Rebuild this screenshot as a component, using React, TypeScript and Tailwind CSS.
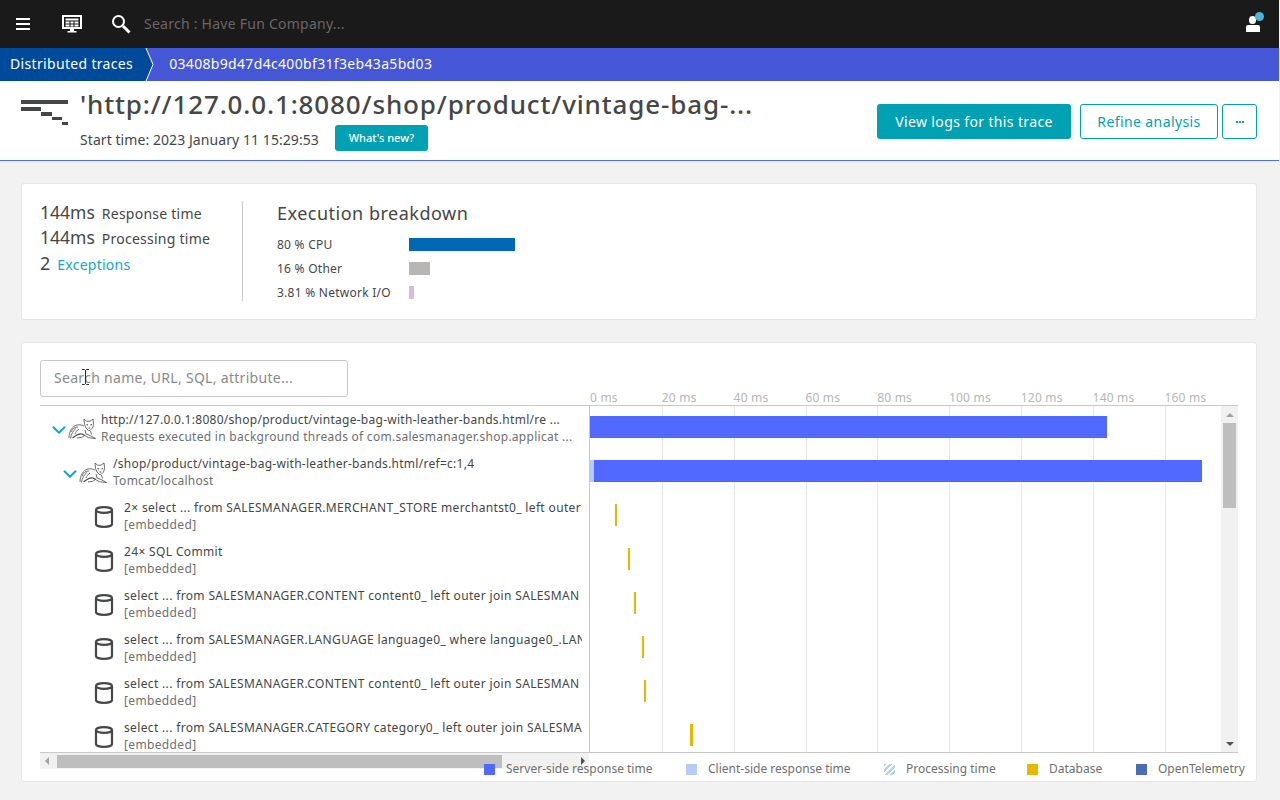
import { ChevronDown } from "lucide-react";

const ticks = ["0 ms", "20 ms", "40 ms", "60 ms", "80 ms", "100 ms", "120 ms", "140 ms", "160 ms"];

const rows = [
  {
    kind: "tomcat",
    indent: 0,
    title: "http://127.0.0.1:8080/shop/product/vintage-bag-with-leather-bands.html/re ...",
    sub: "Requests executed in background threads of com.salesmanager.shop.applicat ...",
    bars: [{ left: 0, width: 517, color: "#5269ff" }],
  },
  {
    kind: "tomcat",
    indent: 1,
    title: "/shop/product/vintage-bag-with-leather-bands.html/ref=c:1,4",
    sub: "Tomcat/localhost",
    bars: [
      { left: 0, width: 4, color: "#b4ccf7" },
      { left: 4, width: 608, color: "#5269ff" },
    ],
  },
  { kind: "db", title: "2× select ... from SALESMANAGER.MERCHANT_STORE merchantst0_ left outer", sub: "[embedded]", bars: [{ left: 25, width: 2, color: "#e6b800" }] },
  { kind: "db", title: "24× SQL Commit", sub: "[embedded]", bars: [{ left: 38, width: 2, color: "#e6b800" }] },
  { kind: "db", title: "select ... from SALESMANAGER.CONTENT content0_ left outer join SALESMAN", sub: "[embedded]", bars: [{ left: 44, width: 2, color: "#e6b800" }] },
  { kind: "db", title: "select ... from SALESMANAGER.LANGUAGE language0_ where language0_.LAN", sub: "[embedded]", bars: [{ left: 52, width: 2, color: "#e6b800" }] },
  { kind: "db", title: "select ... from SALESMANAGER.CONTENT content0_ left outer join SALESMAN", sub: "[embedded]", bars: [{ left: 54, width: 2, color: "#e6b800" }] },
  { kind: "db", title: "select ... from SALESMANAGER.CATEGORY category0_ left outer join SALESMA", sub: "[embedded]", bars: [{ left: 100, width: 3, color: "#e6b800" }] },
];

const legend = [
  { label: "Server-side response time", swatch: "bg-[#5269ff]", width: "w-[202px]" },
  { label: "Client-side response time", swatch: "bg-[#b4ccf7]", width: "w-[198px]" },
  { label: "Processing time", swatch: "bg-[repeating-linear-gradient(135deg,#b4ccf7_0,#b4ccf7_2px,#ffffff_2px,#ffffff_4px)]", width: "w-[143px]" },
  { label: "Database", swatch: "bg-[#e6b800]", width: "w-[109px]" },
  { label: "OpenTelemetry", swatch: "bg-[#4a6cb3]", width: "" },
];

function TomcatIcon() {
  return (
    <svg width="28" height="22" viewBox="0 0 28 22" fill="none" stroke="#4a4a4a" strokeWidth="0.8" className="ml-[-2px] shrink-0">
      <path d="M1 20C1 14 4 8 9 7c3-.6 5 0 7 1" />
      <path d="M2.500 20.500c.5-4 2.500-8 5.500-10M3 14c2-4 4-5 7-5" />
      <path d="M4.500 20l3.500-2.500c2-1.500 4-2 6-1.500l3 1.500" strokeWidth="1.2" />
      <path d="M16 1l2.500 2.200h3.500L25 1l.6 5.500-1.100 3.500-2.500 2.500h-1.500l-2.500-2.500-1.500-3.500z" fill="#ffffff" />
      <path d="M18.500 6.500l1.500.6M24 6.500l-1.500.6M20.500 10h1.800" strokeWidth="1.1" />
      <path d="M11 11c-2 1.500-3.500 3-4 5M17 12l1 4 4 1.500 5.500 3-7-.8-4-2.200-3 2-4.500.4" />
      <path d="M22.500 13l1 3.500" />
    </svg>
  );
}

function DbIcon() {
  return (
    <svg width="20" height="24" viewBox="0 0 20 24" fill="none" stroke="#454646" strokeWidth="2.2" className="shrink-0">
      <ellipse cx="10" cy="5" rx="8" ry="2.8" />
      <path d="M2 5v14c0 1.600 3.600 2.800 8 2.800s8-1.200 8-2.800V5" />
    </svg>
  );
}

function TraceRow({ row }: { row: (typeof rows)[number] }) {
  const isDb = row.kind === "db";
  return (
    <div className="flex h-11">
      <div className="w-[542px] shrink-0 overflow-hidden">
        {isDb ? (
          <div className="flex h-11 pl-[54px]">
            <div className="mt-[11px] w-[30px] shrink-0">
              <DbIcon />
            </div>
            <div className="w-[458px] shrink-0 overflow-hidden whitespace-nowrap pt-[5px] text-xs leading-[17px] tracking-[0.35px]">
              <div className="text-[#454646]">{row.title}</div>
              <div className="text-[#6f6f6f]">{row.sub}</div>
            </div>
          </div>
        ) : (
          <div className={`flex h-11 ${row.indent ? "pl-[19px]" : "pl-[8px]"}`}>
            <ChevronDown className="mt-[13px] h-[22px] w-[22px] shrink-0 text-[#12a7c9]" strokeWidth={2.2} />
            <div className="mt-[12px]">
              <TomcatIcon />
            </div>
            <div className={`${row.indent ? "ml-[6px]" : "ml-[5px]"} overflow-hidden whitespace-nowrap pt-[6px] text-xs leading-[16px] tracking-[0.27px]`}>
              <div className="text-[#454646]">{row.title}</div>
              <div className="mt-[1px] text-[#6f6f6f]">{row.sub}</div>
            </div>
          </div>
        )}
      </div>
      <div className="relative ml-[8px] w-[632px] shrink-0">
        {row.bars.map((b, i) => (
          <div
            key={i}
            className="absolute top-[10px] h-[22px]"
            style={{ left: b.left, width: b.width, backgroundColor: b.color }}
          />
        ))}
      </div>
    </div>
  );
}

export default function App() {
  return (
    <div className="h-[800px] w-[1280px] overflow-hidden bg-[#f2f2f2] font-['Noto_Sans',sans-serif] text-[#454646]">
      <div className="w-[1279px]">
        {/* top bar */}
        <div className="flex h-12 items-center bg-[#1b1a1b] pr-[15px] pl-[16px]">
          <div className="flex w-[14px] flex-col gap-[3px]">
            <div className="h-[2px] bg-white" />
            <div className="h-[2px] bg-white" />
            <div className="h-[2px] bg-white" />
          </div>
          <svg width="20" height="18" viewBox="0 0 20 18" className="ml-[32px]" fill="#ffffff">
            <path d="M1 1h18v12H1z" fill="none" stroke="#fff" strokeWidth="2" />
            <path d="M3.500 3.500h13v2h-13zM3.500 6.500h4v2h-4zM8.500 6.500h3v2h-3zM12.500 6.500h4v2h-4zM3.500 9.500h4v2h-4zM8.500 9.500h3v2h-3zM12.500 9.500h4v2h-4zM8 14h4v2h-4zM5.500 16h9v1.500h-9z" />
          </svg>
          <svg width="20" height="20" viewBox="0 0 20 20" className="ml-[29px]" fill="none" stroke="#fff">
            <circle cx="7.500" cy="7.500" r="5.500" strokeWidth="2" />
            <path d="M12 12l6.500 6.500" strokeWidth="3" />
          </svg>
          <span className="ml-[13px] text-sm tracking-[0.25px] text-[#6a6566]">Search : Have Fun Company...</span>
          <div className="relative ml-auto h-[20px] w-[18px]">
            <div className="absolute top-[2px] left-[3px] h-[8px] w-[7px] rounded-full bg-white" />
            <div className="absolute top-[11px] left-0 h-[7px] w-[14px] rounded-t-[2px] bg-white" />
            <div className="absolute top-[-2px] left-[9px] h-[9px] w-[9px] rounded-full bg-[#4ab5d4]" />
          </div>
        </div>

        {/* breadcrumb */}
        <div className="flex h-[33px] items-center bg-[#4556d7] text-sm tracking-[0.33px] text-white">
          <div className="flex h-full items-center bg-[#004a9c] pr-[12px] pb-[2px] pl-[10px]">Distributed traces</div>
          <svg width="9" height="33" viewBox="0 0 9 33" className="shrink-0">
            <path d="M0 0h1l7 16.500L1 33H0z" fill="#004a9c" />
            <path d="M1 0l7 16.500L1 33" fill="none" stroke="#fff" strokeWidth="1" />
          </svg>
          <span className="ml-[15px] pb-[2px]">03408b9d47d4c400bf31f3eb43a5bd03</span>
        </div>

        {/* page header */}
        <div className="flex h-[80px] items-start border-b border-[#5269ff] bg-white">
          <svg width="48" height="26" viewBox="0 0 48 26" className="mt-[19px] ml-[21px] shrink-0" fill="#454646">
            <path d="M0 0h47v4H0zM0 7h20v4H0zM20 12h11v4H20zM31 17h10v3H31zM41 22h6v3h-6z" />
          </svg>
          <div className="ml-[11px] min-w-0">
            <div className="mt-[5px] text-[26px] leading-[36px] font-medium tracking-[0.86px] whitespace-nowrap">
              'http://127.0.0.1:8080/shop/product/vintage-bag-...
            </div>
            <div className="mt-[3px] flex items-center">
              <span className="pt-[4px] text-sm tracking-[0.07px]">Start time: 2023 January 11 15:29:53</span>
              <button className="ml-[16px] h-[26px] w-[93px] rounded-[3px] bg-[#00a1b2] text-[11px] font-medium text-white">
                What's new?
              </button>
            </div>
          </div>
          <div className="mt-[23px] mr-[22px] ml-auto flex">
            <button className="h-[35px] w-[194px] rounded-[3px] bg-[#00a1b2] text-sm tracking-[0.37px] text-white">
              View logs for this trace
            </button>
            <button className="ml-[9px] h-[35px] w-[138px] rounded-[3px] border border-[#00a1b2] text-sm tracking-[0.4px] text-[#00a1b2]">
              Refine analysis
            </button>
            <button className="ml-[4px] flex h-[35px] w-[35px] items-center justify-center gap-[1px] rounded-[3px] border border-[#00a1b2]">
              <span className="h-[2px] w-[2px] bg-[#00a1b2]" />
              <span className="h-[2px] w-[2px] bg-[#00a1b2]" />
              <span className="h-[2px] w-[2px] bg-[#00a1b2]" />
            </button>
          </div>
        </div>

        {/* summary card */}
        <div className="mt-[22px] ml-[21px] flex h-[137px] w-[1236px] rounded-[3px] border border-[#e6e6e6] bg-white pt-[17px] pl-[18px]">
          <div className="h-[100px] w-[203px] border-r border-[#c9c9c9]">
            <div className="-mt-[2px] flex h-[25px] items-baseline">
              <span className="text-[17.500px]">144ms</span>
              <span className="ml-[7px] text-sm tracking-[0.25px]">Response time</span>
            </div>
            <div className="flex h-[25px] items-baseline">
              <span className="text-[17.500px]">144ms</span>
              <span className="ml-[7px] text-sm tracking-[0.25px]">Processing time</span>
            </div>
            <div className="flex h-[27px] items-baseline">
              <span className="text-lg">2</span>
              <span className="ml-[7px] text-sm tracking-[0.25px] text-[#12a7c9]">Exceptions</span>
            </div>
          </div>
          <div className="ml-[34px]">
            <div className="text-lg leading-[25px] tracking-[0.5px]">Execution breakdown</div>
            <div className="mt-[10px] flex h-[24px] text-xs leading-[18px] tracking-[0.25px]">
              <span className="w-[132px]">80 % CPU</span>
              <div className="mt-[2px] h-[13px] w-[106px] bg-[#0068b5]" />
            </div>
            <div className="flex h-[24px] text-xs leading-[18px] tracking-[0.25px]">
              <span className="w-[132px]">16 % Other</span>
              <div className="mt-[2px] h-[13px] w-[21px] bg-[#b7b6b5]" />
            </div>
            <div className="flex h-[24px] text-xs leading-[18px] tracking-[0.25px]">
              <span className="w-[132px]">3.81 % Network I/O</span>
              <div className="mt-[2px] h-[13px] w-[5px] bg-[#d6bbdf]" />
            </div>
          </div>
        </div>

        {/* trace card */}
        <div className="relative mt-[22px] ml-[21px] h-[440px] w-[1236px] rounded-[3px] border border-[#e6e6e6] bg-white pt-[17px] pl-[18px]">
          <div className="flex h-[45px]">
            <div className="flex h-[37px] w-[308px] items-center rounded-[3px] border border-[#c9c9c9] pb-[2px] pl-[13px] text-sm tracking-[0.3px] text-[#8a8a8a]">
              Search name, URL, SQL, attribute...
            </div>
            <div className="mt-[30px] ml-[242px] flex w-[648px] text-xs leading-[15px] tracking-[0.2px] text-[#b7b6b5]">
              {ticks.map((t) => (
                <span key={t} className="w-[71.800px] shrink-0">
                  {t}
                </span>
              ))}
            </div>
          </div>

          {/* tree + timeline */}
          <div className="relative h-[348px] w-[1198px] overflow-hidden border-y border-[#c9c9c9]">
            <div className="absolute top-0 bottom-0 left-[549px] w-[632px] border-l border-[#c9c9c9]">
              <div className="flex h-full pl-[72px]">
                {ticks.slice(1).map((t) => (
                  <div key={t} className="h-full w-[71.800px] shrink-0 border-l border-[#e6e6e6]" />
                ))}
              </div>
            </div>
            <div className="relative">
              {rows.map((row, i) => (
                <TraceRow key={i} row={row} />
              ))}
            </div>
            {/* vertical scrollbar */}
            <div className="absolute top-0 right-0 bottom-0 flex w-[17px] flex-col items-center bg-[#f1f1f1]">
              <div className="mt-[7px] h-0 w-0 border-x-[4px] border-b-[4px] border-x-transparent border-b-[#a3a3a3]" />
              <div className="mt-[6px] h-[85px] w-[13px] bg-[#bebebe]" />
              <div className="mt-auto mb-[6px] h-0 w-0 border-x-[4px] border-t-[4px] border-x-transparent border-t-[#505050]" />
            </div>
          </div>

          {/* horizontal scrollbar */}
          <div className="flex h-[16px] w-[549px] items-center bg-[#f1f1f1]">
            <div className="ml-[5px] h-0 w-0 border-y-[4px] border-r-[4px] border-y-transparent border-r-[#a3a3a3]" />
            <div className="ml-[8px] h-[13px] w-[445px] bg-[#bebebe]" />
            <div className="ml-[79px] h-0 w-0 border-y-[4px] border-l-[4px] border-y-transparent border-l-[#505050]" />
          </div>

          {/* legend overlaps the scrollbar */}
          <div className="absolute top-[419px] left-[462px] flex text-xs leading-[14px] text-[#6f6f6f]">
            {legend.map((l) => (
              <div key={l.label} className={`flex shrink-0 items-center ${l.width}`}>
                <span className={`h-[11px] w-[11px] shrink-0 ${l.swatch}`} />
                <span className="ml-[11px] whitespace-nowrap">{l.label}</span>
              </div>
            ))}
          </div>

          {/* text cursor */}
          <svg width="9" height="16" viewBox="0 0 9 16" className="absolute top-[26px] left-[59px]" fill="none" stroke="#2b2b2b">
            <path d="M1 .5h2.500l1 1 1-1H8M4.500 1.500v13M1 15.500h2.500l1-1 1 1H8" />
          </svg>
        </div>
      </div>
    </div>
  );
}
